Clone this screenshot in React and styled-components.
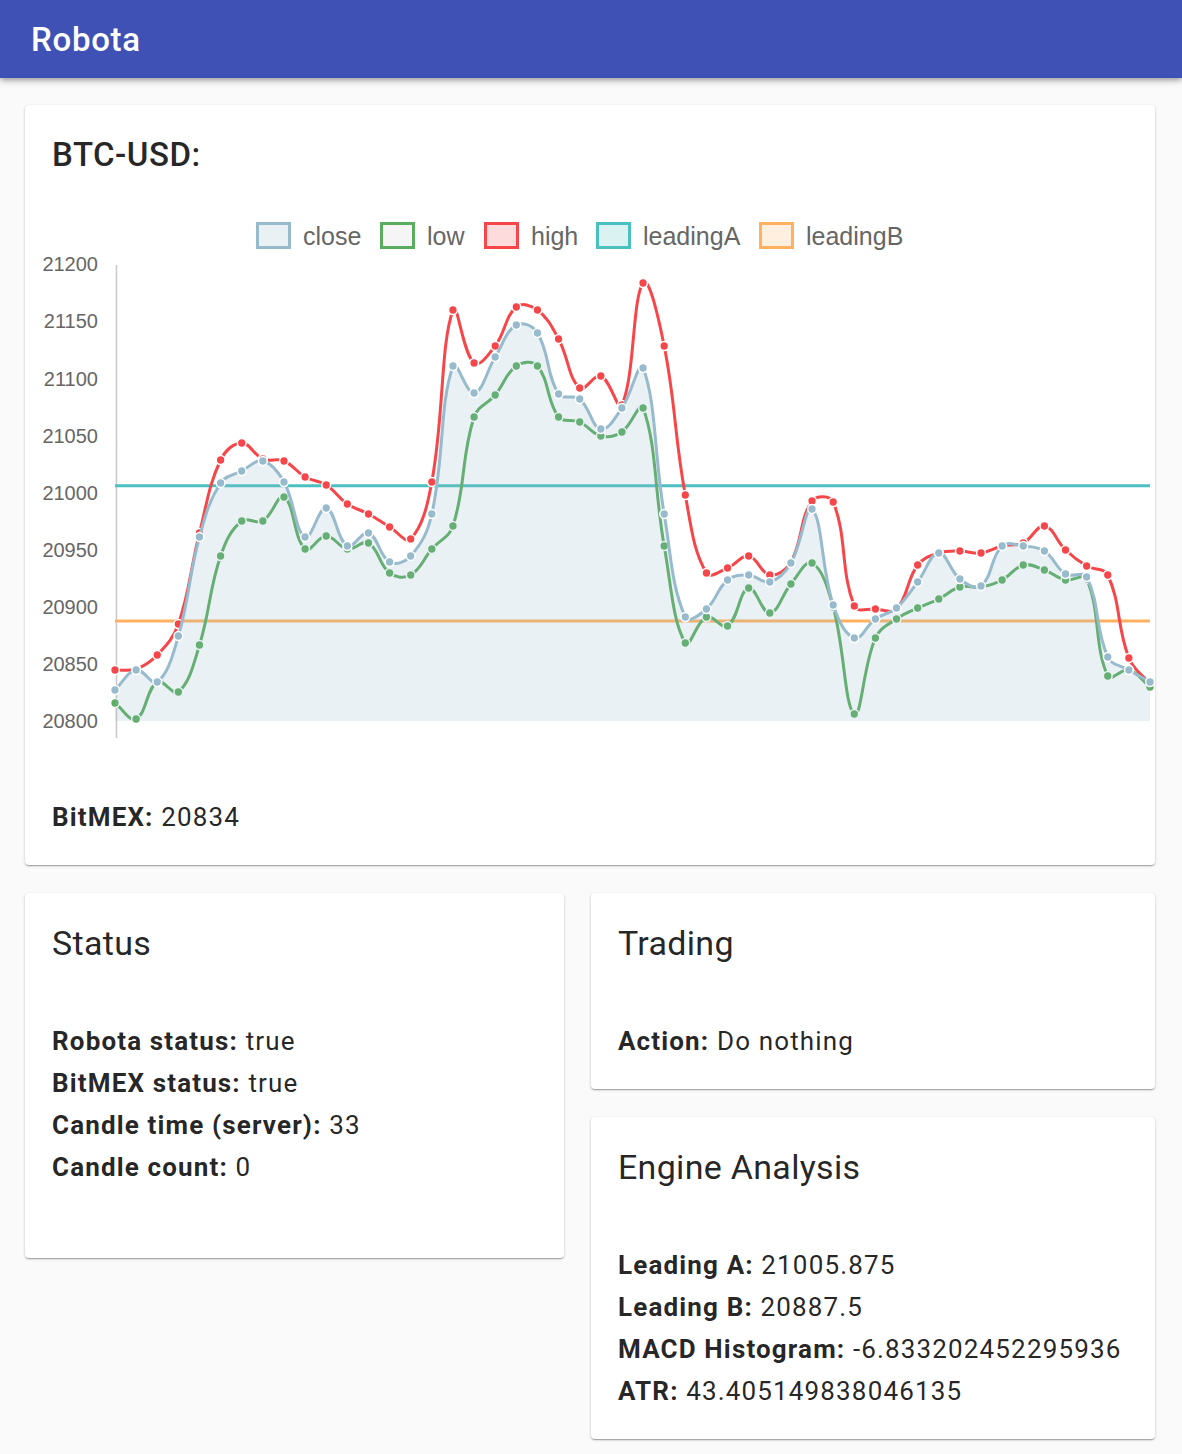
import React from "react";
import styled, { createGlobalStyle } from "styled-components";

const GlobalStyle = createGlobalStyle`
  body {
    margin: 0;
    background: #fafafa;
    font-family: Roboto, "Liberation Sans", sans-serif;
    color: rgba(0, 0, 0, 0.87);
  }
`;

const Header = styled.header`
  height: 78px;
  background: #3f51b5;
  display: flex;
  align-items: center;
  padding-left: 31px;
  box-shadow: 0 2px 4px -1px rgba(0, 0, 0, 0.2), 0 4px 5px 0 rgba(0, 0, 0, 0.14),
    0 1px 10px 0 rgba(0, 0, 0, 0.12);
  position: relative;
  z-index: 1;
`;

const HeaderTitle = styled.h1`
  margin: 0;
  color: #fff;
  font-size: 33px;
  font-weight: 500;
  letter-spacing: 0.7px;
`;

const Main = styled.main`
  padding: 27px 27px 15px 25px;
  display: flex;
  flex-direction: column;
  gap: 28px;
`;

const Card = styled.section`
  background: #fff;
  border-radius: 4px;
  padding: 30px 27px ${(p) => (p.$extra ? "70px" : "27px")};
  box-shadow: 0 1px 3px 0 rgba(0, 0, 0, 0.2), 0 1px 1px 0 rgba(0, 0, 0, 0.14),
    0 2px 1px -1px rgba(0, 0, 0, 0.12);
`;

const CardTitle = styled.h2`
  margin: 0;
  font-size: ${(p) => (p.$strong ? "33px" : "34px")};
  font-weight: ${(p) => (p.$strong ? 500 : 400)};
  letter-spacing: ${(p) => (p.$strong ? "0.5px" : "0.3px")};
  line-height: 40px;
`;

const Lines = styled.div`
  margin-top: ${(p) => (p.$gap ? "57px" : "0")};
  font-size: 26px;
  line-height: 42px;
  letter-spacing: 1.15px;
  b {
    font-weight: 700;
  }
`;

const ChartSvg = styled.svg`
  display: block;
  margin: 0 -27px;
  width: calc(100% + 54px);
  height: 621px;
`;

const Row = styled.div`
  display: grid;
  grid-template-columns: 539px 564px;
  gap: 27px;
  align-items: start;
`;

const Column = styled.div`
  display: flex;
  flex-direction: column;
  gap: 28px;
`;

const X0 = 115;
const DX = (1150 - 115) / 49;

const high = [670, 669, 655, 624, 533, 460, 443, 459, 461, 477, 485, 504, 514, 527, 539, 482, 310, 363, 346, 307,
  310, 339, 388, 376, 405, 283, 346, 495, 573, 568, 556, 575, 562, 501, 502, 606, 609, 609, 565, 553,
  551, 553, 546, 543, 526, 550, 566, 575, 658, 684];
const close = [690, 670, 682, 636, 537, 483, 471, 461, 482, 537, 508, 546, 533, 562, 556, 514, 366, 393, 357, 325,
  333, 394, 399, 429, 408, 368, 514, 617, 609, 580, 575, 582, 563, 509, 605, 638, 619, 608, 582, 553,
  579, 586, 546, 546, 551, 574, 577, 657, 670, 682];
const low = [703, 719, 682, 692, 645, 556, 521, 521, 497, 549, 536, 549, 543, 573, 575, 549, 526, 417, 395, 366,
  366, 417, 422, 436, 432, 408, 546, 643, 617, 626, 588, 613, 584, 563, 607, 714, 638, 619, 608, 599,
  587, 587, 580, 565, 570, 580, 579, 676, 670, 687];

const toPoints = (ys) => ys.map((y, i) => [X0 + DX * i, y]);

// same bezier as chart.js with tension 0.4
const spline = (pts, t = 0.4) => {
  const cps = pts.map((p, i) => {
    const prev = pts[i - 1] || p;
    const next = pts[i + 1] || p;
    const d01 = Math.hypot(p[0] - prev[0], p[1] - prev[1]);
    const d12 = Math.hypot(next[0] - p[0], next[1] - p[1]);
    const sum = d01 + d12 || 1;
    const fa = (t * d01) / sum;
    const fb = (t * d12) / sum;
    return {
      prev: [p[0] - fa * (next[0] - prev[0]), p[1] - fa * (next[1] - prev[1])],
      next: [p[0] + fb * (next[0] - prev[0]), p[1] + fb * (next[1] - prev[1])],
    };
  });
  let d = `M${pts[0][0]},${pts[0][1]}`;
  for (let i = 1; i < pts.length; i++) {
    const a = cps[i - 1].next;
    const b = cps[i].prev;
    d += ` C${a[0].toFixed(1)},${a[1].toFixed(1)} ${b[0].toFixed(1)},${b[1].toFixed(1)} ${pts[i][0].toFixed(1)},${pts[i][1]}`;
  }
  return d;
};

const yOf = (v) => 721 - (v - 20800) * (457 / 400);

const legend = [
  { label: "close", x: 256, stroke: "#97bbcd", fill: "#eaf1f5" },
  { label: "low", x: 380, stroke: "#5aad5e", fill: "#f5f5f5" },
  { label: "high", x: 484, stroke: "#f7464a", fill: "#fddadb" },
  { label: "leadingA", x: 596, stroke: "#4bc0c0", fill: "#dbf2f2" },
  { label: "leadingB", x: 759, stroke: "#ffb160", fill: "#ffefdf" },
];

const ticks = [21200, 21150, 21100, 21050, 21000, 20950, 20900, 20850, 20800];

const Series = ({ pts, color }) => (
  <g>
    <path d={spline(pts)} fill="none" stroke={color} strokeWidth="3" />
    {pts.map((p, i) => (
      <circle key={i} cx={p[0]} cy={p[1]} r="4.4" fill={color} stroke="#fff" strokeWidth="1.5" />
    ))}
  </g>
);

const Chart = () => {
  const hp = toPoints(high);
  const cp = toPoints(close);
  const lp = toPoints(low);
  const la = yOf(21005.875);
  const lb = yOf(20887.5);
  return (
    <ChartSvg viewBox="25 175 1130 621" preserveAspectRatio="none">
      {legend.map((l) => (
        <g key={l.label}>
          <rect x={l.x + 1.5} y={223.5} width={32} height={24} fill={l.fill} stroke={l.stroke} strokeWidth="3" />
          <text x={l.x + 47} y={238.5} dominantBaseline="middle" fontFamily="'Liberation Sans', Arial, sans-serif" fontSize="25" fill="#666">
            {l.label}
          </text>
        </g>
      ))}
      {ticks.map((t) => (
        <text key={t} x={98} y={yOf(t) + 2} textAnchor="end" dominantBaseline="middle" fontFamily="'Liberation Sans', Arial, sans-serif" fontSize="20" fill="#666">
          {t}
        </text>
      ))}
      <line x1="116.5" y1="265" x2="116.5" y2="738" stroke="#c8c8c8" strokeWidth="1.5" />
      <line x1={X0} y1={lb} x2={1150} y2={lb} stroke="#ffb160" strokeWidth="3" />
      <line x1={X0} y1={la} x2={1150} y2={la} stroke="#4bc0c0" strokeWidth="3" />
      <Series pts={hp} color="#f7464a" />
      <Series pts={lp} color="#5aad5e" />
      <path d={`${spline(cp)} L1150,721 L${X0},721 Z`} fill="rgba(151,187,205,0.2)" stroke="none" />
      <Series pts={cp} color="#97bbcd" />
    </ChartSvg>
  );
};

const Item = ({ label, value }) => (
  <div>
    <b>{label}:</b> {value}
  </div>
);

const App = () => (
  <>
    <GlobalStyle />
    <Header>
      <HeaderTitle>Robota</HeaderTitle>
    </Header>
    <Main>
      <Card>
        <CardTitle $strong>BTC-USD:</CardTitle>
        <Chart />
        <Lines>
          <Item label="BitMEX" value="20834" />
        </Lines>
      </Card>
      <Row>
        <Card $extra>
          <CardTitle>Status</CardTitle>
          <Lines $gap>
            <Item label="Robota status" value="true" />
            <Item label="BitMEX status" value="true" />
            <Item label="Candle time (server)" value="33" />
            <Item label="Candle count" value="0" />
          </Lines>
        </Card>
        <Column>
          <Card>
            <CardTitle>Trading</CardTitle>
            <Lines $gap>
              <Item label="Action" value="Do nothing" />
            </Lines>
          </Card>
          <Card>
            <CardTitle>Engine Analysis</CardTitle>
            <Lines $gap>
              <Item label="Leading A" value="21005.875" />
              <Item label="Leading B" value="20887.5" />
              <Item label="MACD Histogram" value="-6.833202452295936" />
              <Item label="ATR" value="43.405149838046135" />
            </Lines>
          </Card>
        </Column>
      </Row>
    </Main>
  </>
);

export default App;
